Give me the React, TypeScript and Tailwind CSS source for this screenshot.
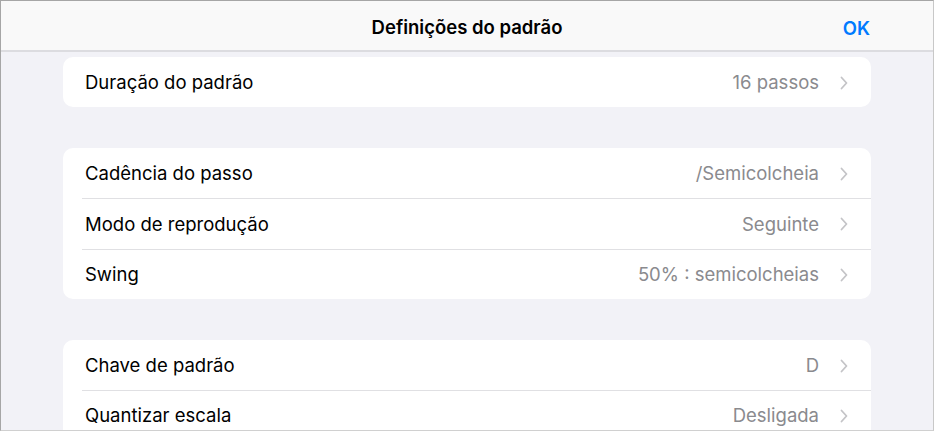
import React from "react";

type Row = { label: string; value: string };

const groups: Row[][] = [
  [{ label: "Duração do padrão", value: "16 passos" }],
  [
    { label: "Cadência do passo", value: "/Semicolcheia" },
    { label: "Modo de reprodução", value: "Seguinte" },
    { label: "Swing", value: "50% : semicolcheias" },
  ],
  [
    { label: "Chave de padrão", value: "D" },
    { label: "Quantizar escala", value: "Desligada" },
  ],
];

function Chevron() {
  return (
    <svg width="8" height="14" viewBox="0 0 8 14" className="ml-[21px] shrink-0">
      <path d="M1.5 1.5 L6.5 7 L1.5 12.5" fill="none" stroke="#c4c4c7" strokeWidth="1.8" strokeLinecap="round" strokeLinejoin="round" />
    </svg>
  );
}

export default function App() {
  return (
    <div
      className="w-[934px] h-[431px] overflow-hidden bg-[#f2f2f7] border-l border-t border-r border-b border-l-[#a6a6a6] border-t-[#a6a6a6] border-r-[#c8c8c8] border-b-[#d0d0d0] flex flex-col"
      style={{ fontFamily: "Inter, 'Noto Sans', sans-serif" }}
    >
      <div className="h-[51px] shrink-0 bg-[#f9f9f9] border-b-2 border-[#dcdce0] flex items-center relative pt-[4px]">
        <div className="flex-1 text-center text-[18.5px] font-semibold text-black">Definições do padrão</div>
        <div className="absolute right-[63px] top-[14px] text-[18.5px] font-semibold text-[#007aff]">OK</div>
      </div>
      <div className="flex flex-col gap-[40.5px] pt-[5px] px-[62px]">
        {groups.map((g, gi) => (
          <div key={gi} className="bg-white rounded-[10px] flex flex-col">
            {g.map((r, ri) => (
              <div key={ri} className="relative h-[50.4px] shrink-0 flex items-center pl-[22px] pr-[23px] pt-[2px]">
                {ri > 0 && <div className="absolute top-0 left-[19px] right-0 h-px bg-[#e0e0e3]" />}
                <span className="flex-1 text-[18.5px] text-black">{r.label}</span>
                <span className="text-[18.5px] text-[#8a8a8e]">{r.value}</span>
                <Chevron />
              </div>
            ))}
          </div>
        ))}
      </div>
    </div>
  );
}
